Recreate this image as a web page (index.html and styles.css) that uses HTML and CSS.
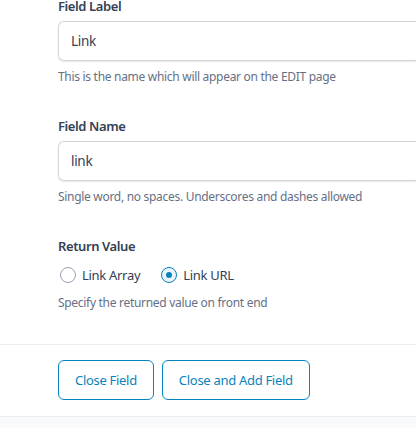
FILE: index.html
```html
<!DOCTYPE html>
<html>
<head>
<meta charset="utf-8">
<link rel="stylesheet" href="styles.css">
</head>
<body>
<div class="panel">
  <div class="fields">
    <div class="field">
      <label class="label">Field Label</label>
      <div class="input">Link</div>
      <p class="hint">This is the name which will appear on the EDIT page</p>
    </div>
    <div class="field">
      <label class="label">Field Name</label>
      <div class="input">link</div>
      <p class="hint">Single word, no spaces. Underscores and dashes allowed</p>
    </div>
    <div class="field">
      <label class="label">Return Value</label>
      <div class="radios">
        <span class="radio"><span class="dot"></span>Link Array</span>
        <span class="radio checked"><span class="dot"></span>Link URL</span>
      </div>
      <p class="hint hint-radio">Specify the returned value on front end</p>
    </div>
  </div>
  <div class="actions">
    <button class="btn">Close Field</button>
    <button class="btn">Close and Add Field</button>
  </div>
  <div class="footer"></div>
</div>
</body>
</html>
```
FILE: styles.css
```css
html, body {
  margin: 0;
  padding: 0;
  background: #fff;
  overflow: hidden;
}
body {
  font-family: "Noto Sans", "Open Sans", sans-serif;
  color: #344054;
}
.panel {
  margin-top: -4px;
}
.fields {
  padding-left: 58px;
  padding-bottom: 31px;
}
.field + .field {
  margin-top: 29px;
}
.label {
  display: block;
  font-size: 13px;
  letter-spacing: -0.4px;
  line-height: 20px;
  font-weight: 600;
  color: #344054;
  margin-bottom: 5px;
}
.input {
  height: 40px;
  box-sizing: border-box;
  border: 1px solid #d0d5dd;
  border-right: none;
  border-radius: 6px 0 0 6px;
  box-shadow: 0 1px 2px rgba(16, 24, 40, 0.1);
  padding: 0 12px;
  display: flex;
  align-items: center;
  font-size: 13.5px;
  letter-spacing: -0.3px;
  color: #344054;
}
.hint {
  margin: 6px 0 0;
  font-size: 12px;
  letter-spacing: -0.3px;
  line-height: 20px;
  color: #667085;
}
.radios {
  display: flex;
  gap: 19px;
  margin-top: 9px;
  font-size: 13px;
  letter-spacing: -0.3px;
  line-height: 20px;
}
.radio {
  display: flex;
  align-items: center;
  gap: 6px;
  color: #344054;
}
.dot {
  width: 16px;
  height: 16px;
  box-sizing: border-box;
  border: 1px solid #98a2b3;
  border-radius: 50%;
  margin-left: 2px;
  position: relative;
}
.checked .dot {
  border-color: #0783be;
  background: #ebf5fa;
}
.checked .dot::after {
  content: "";
  position: absolute;
  left: 4px;
  top: 4px;
  width: 6px;
  height: 6px;
  border-radius: 50%;
  background: #0783be;
}
.hint-radio {
  margin-top: 8px;
}
.actions {
  border-top: 1px solid #eaecf0;
  border-bottom: 1px solid #eaecf0;
  padding: 15px 0 16px 58px;
  display: flex;
  gap: 8px;
}
.btn {
  height: 40px;
  padding: 0 16px;
  border: 1px solid #0783be;
  border-radius: 6px;
  background: #fff;
  color: #0783be;
  font-family: "Noto Sans", "Open Sans", sans-serif;
  font-size: 13px;
  letter-spacing: -0.3px;
}
.footer {
  height: 40px;
  background: #f9fafb;
}
```
